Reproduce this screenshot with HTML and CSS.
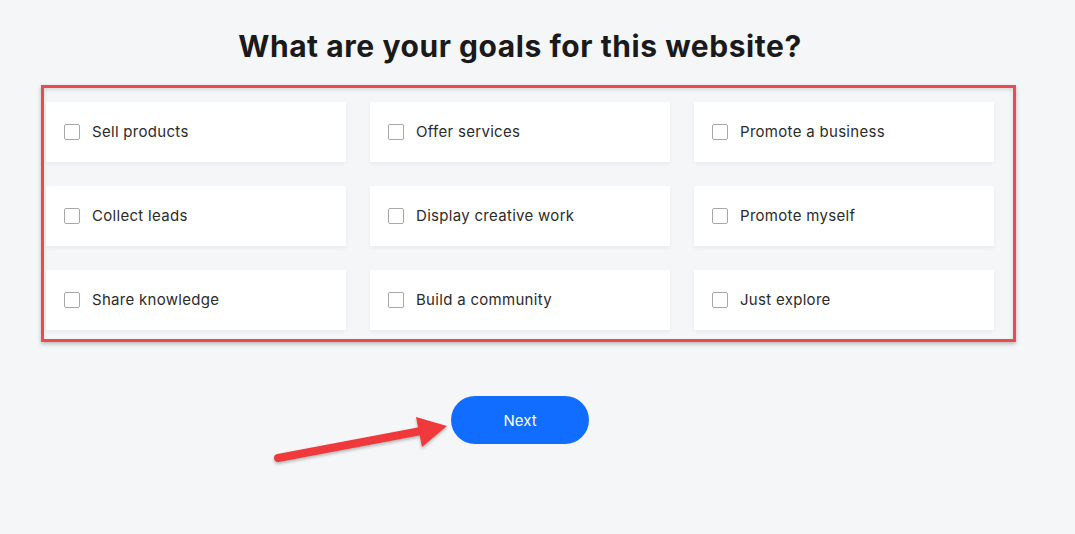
FILE: index.html
```html
<!DOCTYPE html>
<html>
<head>
<meta charset="utf-8">
<link rel="stylesheet" href="styles.css">
</head>
<body>
<main class="page">
  <h1 class="title">What are your goals for this website?</h1>
  <div class="goals">
    <div class="highlight"></div>
    <label class="goal"><span class="box"></span><span class="label">Sell products</span></label>
    <label class="goal"><span class="box"></span><span class="label">Offer services</span></label>
    <label class="goal"><span class="box"></span><span class="label">Promote a business</span></label>
    <label class="goal"><span class="box"></span><span class="label">Collect leads</span></label>
    <label class="goal"><span class="box"></span><span class="label">Display creative work</span></label>
    <label class="goal"><span class="box"></span><span class="label">Promote myself</span></label>
    <label class="goal"><span class="box"></span><span class="label">Share knowledge</span></label>
    <label class="goal"><span class="box"></span><span class="label">Build a community</span></label>
    <label class="goal"><span class="box"></span><span class="label">Just explore</span></label>
  </div>
  <div class="actions">
    <svg class="arrow" width="200" height="70" viewBox="0 0 200 70">
      <line x1="13" y1="54" x2="156" y2="27" stroke="#f0393b" stroke-width="8" stroke-linecap="round"/>
      <polygon points="182,22 151,13 157,43" fill="#f0393b"/>
    </svg>
    <button class="next">Next</button>
  </div>
</main>
</body>
</html>
```

FILE: styles.css
```css
html, body {
  margin: 0;
  padding: 0;
  background: #f5f6f8;
}
body {
  font-family: "Inter", "Noto Sans", sans-serif;
  color: #222;
  min-height: 534px;
}
.page {
  width: 1040px;
  min-height: 534px;
  display: flex;
  flex-direction: column;
  align-items: center;
}
.title {
  margin: 24px 0 0;
  font-size: 30px;
  line-height: 44px;
  font-weight: 700;
  color: #1a1a1a;
  letter-spacing: 0.55px;
}
.goals {
  position: relative;
  margin-top: 34px;
  display: grid;
  grid-template-columns: repeat(3, 300px);
  grid-auto-rows: 60px;
  gap: 24px;
}
.highlight {
  position: absolute;
  left: -5px;
  top: -17px;
  width: 969px;
  height: 251px;
  border: 3px solid #ea4b4c;
  box-shadow: 0 2px 4px rgba(0,0,0,0.25), inset 0 2px 4px rgba(0,0,0,0.12);
  pointer-events: none;
}
.goal {
  background: #fff;
  display: flex;
  align-items: center;
  padding-left: 18px;
  box-shadow: 0 2px 4px rgba(0,0,0,0.05);
}
.box {
  width: 14px;
  height: 14px;
  border: 1px solid #a8a8a8;
  border-radius: 2px;
  background: #fff;
}
.label {
  margin-left: 12px;
  padding-bottom: 2px;
  font-size: 15px;
  letter-spacing: 0.3px;
  color: #2b2b2b;
}
.actions {
  position: relative;
  margin-top: 66px;
}
.next {
  width: 138px;
  height: 48px;
  border: none;
  border-radius: 24px;
  background: #116dff;
  color: #fff;
  font-family: "Inter", "Noto Sans", sans-serif;
  font-size: 15px;
  padding: 0;
}
.arrow {
  position: absolute;
  left: -186px;
  top: 8px;
  overflow: visible;
  filter: drop-shadow(0 2px 1.5px rgba(0,0,0,0.25));
}
```
